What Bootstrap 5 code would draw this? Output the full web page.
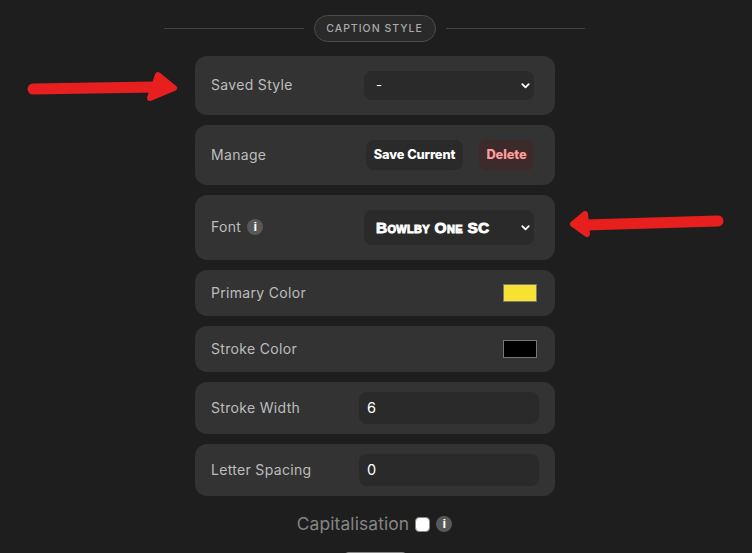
<!DOCTYPE html>
<html lang="en">
<head>
<meta charset="utf-8">
<title>Caption Style</title>
<link href="https://cdn.jsdelivr.net/npm/bootstrap@5.3.0/dist/css/bootstrap.min.css" rel="stylesheet">
<style>
html,body{height:553px;overflow:hidden}
body{background:#1e1e1e;font-family:"Inter","Noto Sans",sans-serif;position:relative;color:#bbb}
.stage{width:752px;padding-top:15px}
.head-wrap{width:421px;margin-left:164px;gap:10px;height:27px}
.head-line{flex:1;height:1px;background:#444}
.head-pill{width:122px;height:27px;border:1px solid #4d4d4d;border-radius:14px;background:#2a2a2a;color:#aaa;font-family:"Inter",sans-serif;font-size:10.5px;font-weight:500;letter-spacing:1px}
.stack{width:360px;margin:14px 0 0 195px;gap:10px}
.set-row{background:#333;border-radius:12px;padding:0 16px;color:#bdbdbd;font-size:14px;letter-spacing:.32px;line-height:20px}
.set-row>span:first-child{margin-top:-1px}
.h59{height:59px}.h60{height:60px}.h65{height:65px}.h46{height:46px}.h52{height:52px}
.sel{width:170px;height:29px;background-color:#2a2a2a;border:0;border-radius:8px;color:#fff;font-size:13px;padding:0 12px;background-image:url("data:image/svg+xml,%3csvg xmlns='http://www.w3.org/2000/svg' viewBox='0 0 12 12'%3e%3cpath fill='none' stroke='%23fff' stroke-width='2' stroke-linecap='round' stroke-linejoin='round' d='M2.5 4.5 6 8l3.5-3.5'/%3e%3c/svg%3e");background-size:11px;background-position:right 3px center;margin-right:5px;box-shadow:none!important}
.sel-font{height:35px;font-family:"Liberation Sans",sans-serif;font-weight:700;font-variant:small-caps;font-size:15.5px;letter-spacing:.3px;-webkit-text-stroke:.9px #fff}
.act{height:30px;border:0;border-radius:8px;font-family:"Inter",sans-serif;font-weight:800;font-size:12.8px;padding:0;letter-spacing:-.1px}
.act-save{width:97px;background:#2a2a2a;color:#fff}
.act-del{width:55px;background:#3d2a2a;color:#ff9d9d;margin-right:5px}
.act-group{gap:16px}
.info{width:16px;height:16px;border-radius:50%;background:#585858;color:#fff;font-family:"Liberation Sans",sans-serif;font-weight:700;font-size:13px;line-height:16px;text-align:center;letter-spacing:0}
.info-gap{gap:6px}
.swatch{width:34px;height:18px;border:1px solid #777;display:block;margin-right:2px}
.sw-y{background:#f8e231}.sw-k{background:#000}
.num{width:180px;height:32px;background:#2a2a2a;border:0;border-radius:8px;color:#fff;font-size:14.5px;padding:0 8px 2px;box-shadow:none!important;font-family:"Inter",sans-serif;margin-right:0}
.num:focus{background:#2a2a2a;color:#fff}
.cap-row{margin-top:17px;gap:6px;color:#858585;font-size:17.4px;height:22px;letter-spacing:.12px;padding-right:3px}
.cap-check{width:15px;height:15px;margin:0;background:#fff;border:1px solid #888;border-radius:3px;box-shadow:none!important}
.stub{position:absolute;left:343px;top:552px;width:65px;height:10px;background:#8a8a8a;border-radius:6px 6px 0 0}
.arrow{position:absolute;left:0;top:0;pointer-events:none}
</style>
</head>
<body>
<div class="stage">
  <div class="head-wrap d-flex align-items-center">
    <span class="head-line"></span>
    <span class="head-pill d-flex align-items-center justify-content-center">CAPTION STYLE</span>
    <span class="head-line"></span>
  </div>
  <div class="stack d-flex flex-column">
    <div class="set-row h59 d-flex align-items-center justify-content-between">
      <span>Saved Style</span>
      <select class="form-select sel" aria-label="Saved Style"><option>-</option></select>
    </div>
    <div class="set-row h60 d-flex align-items-center justify-content-between">
      <span>Manage</span>
      <div class="act-group d-flex">
        <button type="button" class="btn act act-save">Save Current</button>
        <button type="button" class="btn act act-del">Delete</button>
      </div>
    </div>
    <div class="set-row h65 d-flex align-items-center justify-content-between">
      <span class="d-flex align-items-center info-gap">Font <span class="info">i</span></span>
      <select class="form-select sel sel-font" aria-label="Font"><option>Bowlby One SC</option></select>
    </div>
    <div class="set-row h46 d-flex align-items-center justify-content-between">
      <span>Primary Color</span>
      <span class="swatch sw-y ms-auto"></span>
    </div>
    <div class="set-row h46 d-flex align-items-center justify-content-between">
      <span>Stroke Color</span>
      <span class="swatch sw-k ms-auto"></span>
    </div>
    <div class="set-row h52 d-flex align-items-center justify-content-between">
      <span>Stroke Width</span>
      <input class="form-control num" type="number" value="6" aria-label="Stroke Width">
    </div>
    <div class="set-row h52 d-flex align-items-center justify-content-between">
      <span>Letter Spacing</span>
      <input class="form-control num" type="number" value="0" aria-label="Letter Spacing">
    </div>
  </div>
  <div class="cap-row d-flex align-items-center justify-content-center">
    <span>Capitalisation</span>
    <input class="form-check-input cap-check" type="checkbox" aria-label="Capitalisation">
    <span class="info">i</span>
  </div>
</div>
<div class="stub"></div>
<svg class="arrow" width="752" height="553" viewBox="0 0 752 553" aria-hidden="true">
  <g fill="#e81f1f" stroke="#e81f1f" stroke-linejoin="round" stroke-linecap="round">
    <path d="M33 89 L155 87" fill="none" stroke-width="11"/>
    <path d="M158 75 L174 88 L150 98 Z" stroke-width="6"/>
    <path d="M718 221 L585 225" fill="none" stroke-width="11"/>
    <path d="M585 214 L573 224 L587 234 Z" stroke-width="6"/>
  </g>
</svg>
<script src="https://cdn.jsdelivr.net/npm/bootstrap@5.3.0/dist/js/bootstrap.bundle.min.js"></script>
</body>
</html>
